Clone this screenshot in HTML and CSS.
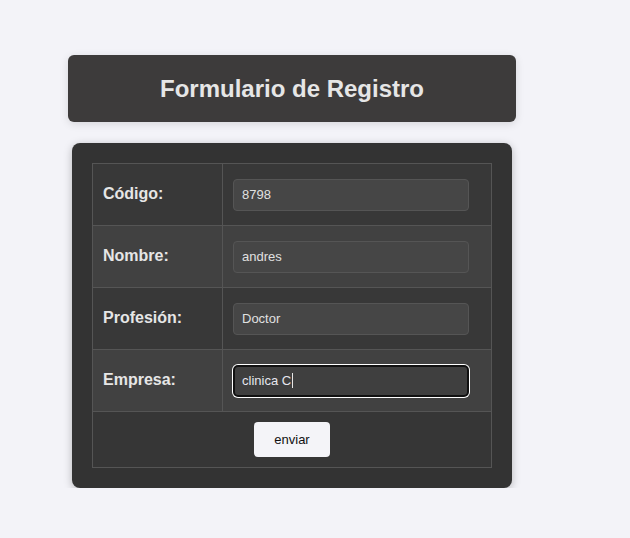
FILE: index.html
```html
<!DOCTYPE html>
<html lang="es">
<head>
<meta charset="utf-8">
<title>Formulario de Registro</title>
<link rel="stylesheet" href="styles.css">
</head>
<body>
<div class="page">
  <header class="title-box">
    <h1>Formulario de Registro</h1>
  </header>
  <form class="card">
    <table class="form-table">
      <tr class="row-a">
        <th><label for="codigo">Código:</label></th>
        <td><input id="codigo" class="field" type="text" value="8798"></td>
      </tr>
      <tr class="row-b">
        <th><label for="nombre">Nombre:</label></th>
        <td><input id="nombre" class="field" type="text" value="andres"></td>
      </tr>
      <tr class="row-a">
        <th><label for="profesion">Profesión:</label></th>
        <td><input id="profesion" class="field" type="text" value="Doctor"></td>
      </tr>
      <tr class="row-b">
        <th><label for="empresa">Empresa:</label></th>
        <td><div class="field field-focus"><span>clinica C</span><span class="caret"></span></div></td>
      </tr>
      <tr class="row-submit">
        <td colspan="2"><button type="button" class="btn">enviar</button></td>
      </tr>
    </table>
  </form>
</div>
</body>
</html>
```
FILE: styles.css
```css
html, body {
  margin: 0;
  padding: 0;
  background: #f3f3f8;
  font-family: "Liberation Sans", Arial, sans-serif;
}
.page {
  padding: 55px 0 0 68px;
  width: 448px;
}
.title-box {
  background: #3d3b3b;
  border-radius: 6px;
  height: 67px;
  display: flex;
  align-items: center;
  justify-content: center;
  box-shadow: 0 2px 8px rgba(0,0,0,0.12);
}
.title-box h1 {
  margin: 0;
  font-size: 24px;
  font-weight: bold;
  color: #e6e6e6;
}
.card {
  margin: 21px 0 0 4px;
  width: 400px;
  padding: 20px;
  background: #333333;
  border-radius: 8px;
  box-shadow: 0 2px 8px rgba(0,0,0,0.25);
}
.form-table {
  width: 400px;
  border-collapse: collapse;
}
.form-table th,
.form-table td {
  border: 1px solid #555555;
  padding: 0;
}
.form-table th {
  width: 119px;
  text-align: left;
  padding: 0 0 2px 10px;
  font-size: 16px;
  font-weight: bold;
  color: #e6e6e6;
  height: 59px;
}
.form-table td {
  padding: 0 21px 0 10px;
  height: 61px;
}
.row-a { background: #383838; }
.row-b { background: #414141; }
.row-submit { background: #363636; }
.row-submit td {
  height: 55px;
  text-align: center;
  padding: 0;
}
.field {
  box-sizing: border-box;
  display: block;
  width: 236px;
  height: 32px;
  padding: 0 8px;
  background: #464646;
  border: 1px solid #555555;
  border-radius: 4px;
  color: #e0e0e0;
  font-family: "Liberation Sans", Arial, sans-serif;
  font-size: 13px;
  outline: none;
}
.field-focus {
  display: flex;
  align-items: center;
  background: #3f3f3f;
  border: 2px solid #111111;
  box-shadow: 0 0 0 1px #ffffff;
  border-radius: 5px;
  padding: 0 7px;
  color: #e6e6ee;
}
.caret {
  display: inline-block;
  width: 1px;
  height: 15px;
  background: #e6e6e6;
  margin-left: 1px;
}
.btn {
  width: 76px;
  height: 35px;
  border: none;
  border-radius: 4px;
  background: #f4f4f8;
  color: #111;
  font-family: "Liberation Sans", Arial, sans-serif;
  font-size: 13px;
  vertical-align: middle;
}
```
